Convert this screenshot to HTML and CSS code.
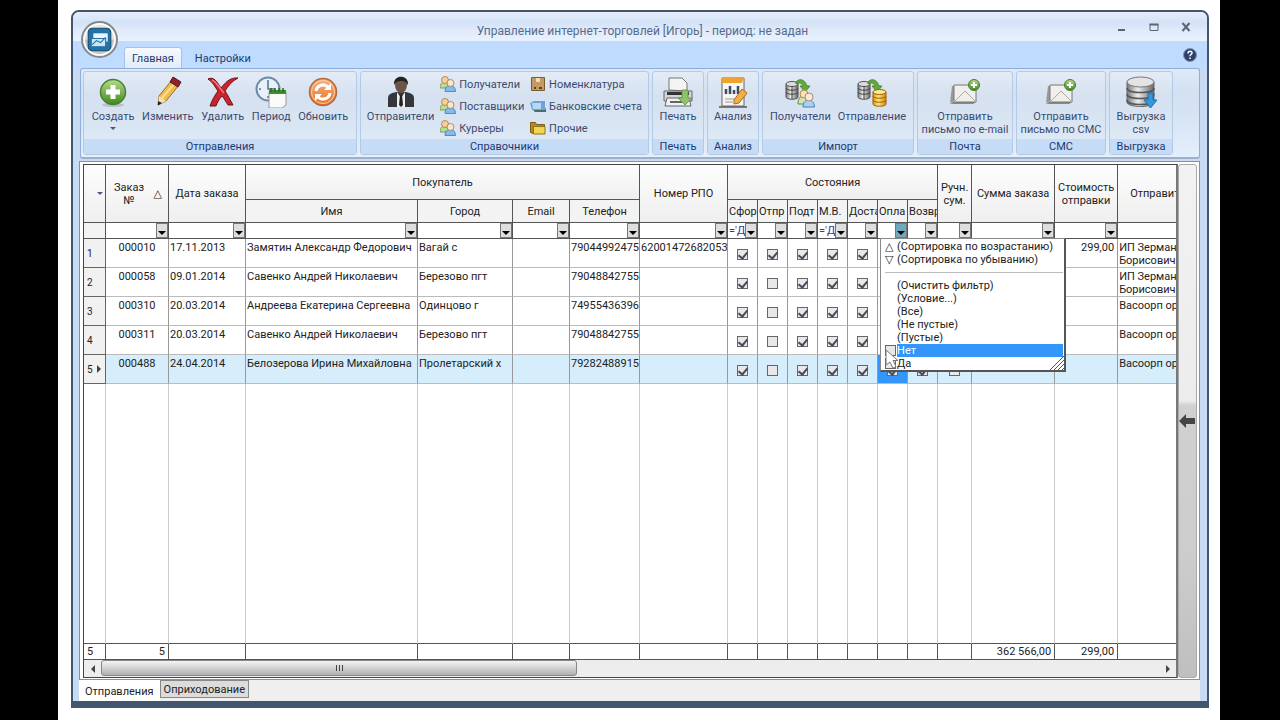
FILE: index.html
```html
<!DOCTYPE html>
<html lang="ru">
<head>
    <meta charset="utf-8">
    <title>Управление интернет-торговлей</title>
    <link rel="stylesheet" href="styles.css">
</head>
<body>
    <!-- Shared icons -->
    <svg class="sprite" aria-hidden="true">
        <defs>
            <linearGradient id="g-metal" x1="0" x2="1"><stop offset="0" stop-color="#777"/><stop offset=".4" stop-color="#eee"/><stop offset="1" stop-color="#666"/></linearGradient>
            <linearGradient id="g-green" x1="0" x2="0" y1="0" y2="1"><stop offset="0" stop-color="#b4dc8c"/><stop offset="1" stop-color="#3f8a1c"/></linearGradient>
            <linearGradient id="g-orange" x1="0" x2="0" y1="0" y2="1"><stop offset="0" stop-color="#f9b27a"/><stop offset="1" stop-color="#e8702a"/></linearGradient>
            <linearGradient id="g-gold" x1="0" x2="1"><stop offset="0" stop-color="#e0970f"/><stop offset=".4" stop-color="#ffe27a"/><stop offset="1" stop-color="#d88a08"/></linearGradient>
        </defs>
        <symbol id="people" viewBox="0 0 16 16">
            <path d="M0 12c0-4 2-6 4.500-6s4.500 2 4.500 6z" fill="#b9dc8e" stroke="#6d8a4e" stroke-width=".8"/>
            <circle cx="5" cy="4" r="3.500" fill="#f9cf96" stroke="#9c7a4c" stroke-width=".8"/>
            <path d="M5 15.500c0-4 2-6 5-6s5.500 2 5.500 6z" fill="#7fbdf0" stroke="#3f78ab" stroke-width=".8"/>
            <circle cx="10.500" cy="7" r="3.500" fill="#fbe6cd" stroke="#9c7a4c" stroke-width=".8"/>
        </symbol>
        <symbol id="letter" viewBox="0 0 32 32">
            <path d="M1 27l4-2V10H3z" fill="#999"/>
            <path d="M1 28l6-4h20v2l-3 2z" fill="#888"/>
            <path d="M5 9h22v17H5z" fill="#f1efec" stroke="#777"/>
            <path d="M5 26l11-11 11 11" fill="none" stroke="#aaa"/>
            <circle cx="25" cy="9" r="5.500" fill="url(#g-green)" stroke="#477c2a"/>
            <path d="M25 6v6M22 9h6" stroke="#fff" stroke-width="2"/>
        </symbol>
        <symbol id="server" viewBox="0 0 32 32">
            <path d="M2 8v13c0 3 12 3 12 0V8z" fill="url(#g-metal)" stroke="#555"/>
            <ellipse cx="8" cy="8" rx="6" ry="2.500" fill="#ddd" stroke="#555"/>
            <path d="M2 12c0 3 12 3 12 0M2 16c0 3 12 3 12 0M8 10v13" fill="none" stroke="#444"/>
            <path d="M12 6c3-4 9-3 11 4h3l-5 6-5-6h3c-1-3-4-4-7-2z" fill="#63ab3a" stroke="#3c7a1c" stroke-width=".8"/>
        </symbol>
    </svg>

    <div class="page">
        <div class="window">
            <div class="titlebar">
                <button class="app-button" aria-label="Меню приложения">
                    <svg viewBox="0 0 36 36">
                        <circle cx="18" cy="18" r="17" fill="#e4e6ea" stroke="#888" stroke-width="2"/>
                        <path d="M2 18h32a16 16 0 0 1-32 0z" fill="#c3c6cb"/>
                        <circle cx="18" cy="18" r="15" fill="none" stroke="#fff" stroke-width="1.500"/>
                        <rect x="7" y="7" width="22" height="22" rx="4" fill="#2374a5" stroke="#124a70"/>
                        <path d="M12 12h14v8H12z" fill="#e9f4fb"/>
                        <path d="M10 17h14v8H10z" fill="#cfe4f2" stroke="#2374a5"/>
                        <path d="M11 23l4-4 4 2 5-5" fill="none" stroke="#2374a5"/>
                    </svg>
                </button>
                <h1>Управление интернет-торговлей [Игорь] - период: не задан</h1>
                <div class="window-controls">
                    <button aria-label="Свернуть"><svg viewBox="0 0 12 12"><path d="M2 9h7" stroke="#5c6470" stroke-width="2"/></svg></button>
                    <button aria-label="Развернуть"><svg viewBox="0 0 12 12"><path d="M2 3.500h8v6H2z" fill="none" stroke="#5c6470"/><path d="M1.500 3.500h9" stroke="#5c6470" stroke-width="2"/></svg></button>
                    <button aria-label="Закрыть"><svg viewBox="0 0 12 12"><path d="M2.500 2l7 8M9.500 2l-7 8" stroke="#5c6470" stroke-width="2"/></svg></button>
                </div>
            </div>

            <div class="ribbon-tabs">
                <button class="ribbon-tab active">Главная</button>
                <button class="ribbon-tab">Настройки</button>
                <button class="help" aria-label="Справка">
                    <svg viewBox="0 0 14 14"><circle cx="7" cy="7" r="6.500" fill="#2d426b" stroke="#8393b3"/><path d="M5 5.500c0-3 4-3 4-.5 0 1.500-2 1.500-2 3.200M7 9.500v1.500" fill="none" stroke="#fff" stroke-width="1.500"/></svg>
                </button>
            </div>

            <div class="ribbon">
                <section class="group group-orders">
                    <div class="group-body">
                        <button class="tool">
                            <svg viewBox="0 0 32 32"><ellipse cx="16" cy="29" rx="11" ry="2" fill="#b9c2cc"/><circle cx="16" cy="16" r="12.500" fill="url(#g-green)" stroke="#4c7d33" stroke-width="1.500"/><path d="M16 9v14M9 16h14" stroke="#fff" stroke-width="5"/></svg>
                            Создать
                            <span class="arrow"></span>
                        </button>
                        <button class="tool">
                            <svg viewBox="0 0 32 32"><path d="M7 20L20 4l7 5-13 16-8 4z" fill="#f3bb4b" stroke="#9b6b25"/><path d="M10 22L23 7" stroke="#ffe08d" stroke-width="2"/><path d="M18 6l3-5 8 5-3 5z" fill="#8c2530" stroke="#5c141c"/><path d="M7 20l7 5-8 4z" fill="#f4dfbd"/><path d="M6 25l4 2-4 2.500z" fill="#222"/></svg>
                            Изменить
                        </button>
                        <button class="tool">
                            <svg viewBox="0 0 32 32"><path d="M1 3c6-3 9 3 13 9C18 7 23 1 31 2c-6 3-10 8-13 13 3 4 5 9 8 14h-5c-2-3-4-7-6-9-3 3-5 7-6 10H3c2-6 5-11 8-15C8 11 6 6 1 3z" fill="#c9232b" stroke="#6d1418"/><path d="M5 4c5 2 7 8 12 13" fill="none" stroke="#ef7b7b" stroke-width="1.500"/></svg>
                            Удалить
                        </button>
                        <button class="tool">
                            <svg viewBox="0 0 32 32"><circle cx="13" cy="13" r="11.500" fill="#e8f1fa" stroke="#6d8aa8" stroke-width="2"/><path d="M13 4v9h7M4 13h2M13 22v-2" fill="none" stroke="#5b6f88" stroke-width="1.500"/><path d="M14 16h17v13l-4 3H14z" fill="#fafafa" stroke="#999"/><path d="M14 14h17v4H14z" fill="#3c8e2f"/><path d="M16 12v4M20 12v4M24 12v4M28 12v4" stroke="#286b1e" stroke-width="1.500"/></svg>
                            Период
                        </button>
                        <button class="tool">
                            <svg viewBox="0 0 32 32"><circle cx="16" cy="16" r="13.500" fill="url(#g-orange)" stroke="#b06a3c" stroke-width="1.500"/><circle cx="16" cy="16" r="11.500" fill="none" stroke="#fbd0ae"/><path d="M9 15c1-6 8-8 12-4M23 17c-1 6-8 8-12 4" fill="none" stroke="#fff" stroke-width="3"/><path d="M24 7v7h-7zM8 25v-7h7z" fill="#fff"/></svg>
                            Обновить
                        </button>
                    </div>
                    <h2>Отправления</h2>
                </section>

                <section class="group group-refs">
                    <div class="group-body">
                        <button class="tool">
                            <svg viewBox="0 0 32 32"><path d="M3 31V22c0-4 4-5 8-6h10c4 1 8 2 8 6v9z" fill="#35373c"/><path d="M12 16l4 6 4-6v15h-8z" fill="#eee"/><path d="M15 19h2l1 10-2 2-2-2z" fill="#222"/><ellipse cx="16" cy="9" rx="6" ry="8" fill="#6b5548"/><path d="M9 9c-1-11 15-11 14 0-2-3-3-4-7-4s-5 1-7 4z" fill="#26221f"/></svg>
                            Отправители
                        </button>
                        <div class="tool-list">
                            <button class="small-tool"><svg><use href="#people"/></svg>Получатели</button>
                            <button class="small-tool"><svg><use href="#people"/></svg>Поставщики</button>
                            <button class="small-tool"><svg><use href="#people"/></svg>Курьеры</button>
                        </div>
                        <div class="tool-list">
                            <button class="small-tool"><svg viewBox="0 0 16 16"><path d="M1.500 1.500h13v13h-13z" fill="#c39a62" stroke="#7d5a30"/><path d="M6 2h4v4H6z" fill="#f1deb7"/><path d="M9 12h3M4 12h2" stroke="#5d4020" stroke-width="2"/></svg>Номенклатура</button>
                            <button class="small-tool"><svg viewBox="0 0 16 16"><path d="M0 5l4-2h11v9H2z" fill="#6ea3d8"/><path d="M2 5h9v6H3z" fill="#b5d8f4"/><path d="M3 12h12l1-3v5H5z" fill="#47706c"/></svg>Банковские счета</button>
                            <button class="small-tool"><svg viewBox="0 0 16 16"><path d="M.5 2.500h5l1 2h8v9H3l-2.500-1z" fill="#b88a1c" stroke="#7c5e15"/><path d="M3.500 6.500h11.500v7.500H3.500z" fill="#f3d64d" stroke="#8d701b"/></svg>Прочие</button>
                        </div>
                    </div>
                    <h2>Справочники</h2>
                </section>

                <section class="group group-single">
                    <div class="group-body">
                        <button class="tool">
                            <svg viewBox="0 0 32 32"><path d="M7 14V2h13l5 5v8z" fill="#f4f4f4" stroke="#777"/><path d="M2 15h28v10H2z" fill="#d4d4d4" stroke="#666"/><path d="M5 16h22v3H5z" fill="#333"/><path d="M5 22h22l2 8H3z" fill="#f1f1f1" stroke="#666"/><path d="M8 26h13" stroke="#666" stroke-width="2"/><path d="M20 14h6v8h4l-7 7-7-7h4z" fill="#8cc36b" stroke="#5b9440" stroke-width=".8"/></svg>
                            Печать
                        </button>
                    </div>
                    <h2>Печать</h2>
                </section>

                <section class="group group-single">
                    <div class="group-body">
                        <button class="tool">
                            <svg viewBox="0 0 32 32"><path d="M2 30h28v2H2z" fill="#777"/><path d="M5 2h22v28H5z" fill="#f5f5f5" stroke="#666"/><path d="M5 1h22l-2 6H5z" fill="#eea32d"/><path d="M9 18v-5M13 18v-8M17 18v-4M21 18v-8" stroke="#3e4d63" stroke-width="2.500"/><path d="M8 23h10M8 26h8" stroke="#999"/><path d="M17 24l8-11 5 4-8 10-5 1z" fill="#f2ad45" stroke="#a86d1e"/></svg>
                            Анализ
                        </button>
                    </div>
                    <h2>Анализ</h2>
                </section>

                <section class="group group-import">
                    <div class="group-body">
                        <button class="tool">
                            <svg viewBox="0 0 32 32"><use href="#server"/><path d="M14 28c0-6 3-8 5-8s5 2 5 8z" fill="#cfe3b4" stroke="#6d8a4e"/><circle cx="20" cy="18" r="4" fill="#f9dfb5" stroke="#b08a55"/><path d="M19 31c0-5 3-7 5.500-7s6 2 6 7z" fill="#a9d0f2" stroke="#4a7fae"/><circle cx="25" cy="21" r="4" fill="#fbe6dd" stroke="#b08a75"/></svg>
                            Получатели
                        </button>
                        <button class="tool">
                            <svg viewBox="0 0 32 32"><use href="#server"/><path d="M17 16v12c0 3 13 3 13 0V16z" fill="url(#g-gold)" stroke="#96640a"/><ellipse cx="23.500" cy="16" rx="6.500" ry="2.500" fill="#ffe698" stroke="#96640a"/><path d="M17 20c0 3 13 3 13 0M17 24c0 3 13 3 13 0" fill="none" stroke="#96640a"/></svg>
                            Отправление
                        </button>
                    </div>
                    <h2>Импорт</h2>
                </section>

                <section class="group group-mail">
                    <div class="group-body">
                        <button class="tool"><svg><use href="#letter"/></svg>Отправить<br>письмо по e-mail</button>
                    </div>
                    <h2>Почта</h2>
                </section>

                <section class="group group-sms">
                    <div class="group-body">
                        <button class="tool"><svg><use href="#letter"/></svg>Отправить<br>письмо по СМС</button>
                    </div>
                    <h2>СМС</h2>
                </section>

                <section class="group group-export">
                    <div class="group-body">
                        <button class="tool">
                            <svg viewBox="0 0 32 32"><path d="M2 6v20c0 6 27 6 27 0V6z" fill="url(#g-metal)" stroke="#666"/><ellipse cx="15.500" cy="6" rx="13.500" ry="5" fill="#e4e4e4" stroke="#777"/><path d="M2 12c0 6 27 6 27 0M2 18c0 6 27 6 27 0M2 24c0 6 27 6 27 0" fill="none" stroke="#555" stroke-width="1.500"/><path d="M23 17h5v7h4l-6.500 8-6.500-8h4z" fill="#3797dc" stroke="#1d6fae"/></svg>
                            Выгрузка<br>csv
                        </button>
                    </div>
                    <h2>Выгрузка</h2>
                </section>
            </div>

            <div class="workspace">
                <div class="grid">
                    <div class="table-box">
                        <table>
                            <colgroup>
                                <col class="c-num"><col class="c-order"><col class="c-date"><col class="c-name"><col class="c-city"><col class="c-email"><col class="c-phone"><col class="c-rpo">
                                <col class="c-state"><col class="c-state"><col class="c-state"><col class="c-state"><col class="c-state"><col class="c-state"><col class="c-state">
                                <col class="c-manual"><col class="c-sum"><col class="c-cost"><col>
                            </colgroup>
                            <thead>
                                <tr class="head-top">
                                    <th rowspan="2" aria-label="Меню таблицы"><span class="arrow corner"></span></th>
                                    <th rowspan="2"><span class="sorted"><span>Заказ<br>№</span><span>△</span></span></th>
                                    <th rowspan="2">Дата заказа</th>
                                    <th colspan="4">Покупатель</th>
                                    <th rowspan="2">Номер РПО</th>
                                    <th colspan="7">Состояния</th>
                                    <th rowspan="2">Ручн.<br>сум.</th>
                                    <th rowspan="2">Сумма заказа</th>
                                    <th rowspan="2">Стоимость<br>отправки</th>
                                    <th rowspan="2" class="clipped">Отправит</th>
                                </tr>
                                <tr class="head-sub">
                                    <th>Имя</th>
                                    <th>Город</th>
                                    <th>Email</th>
                                    <th>Телефон</th>
                                    <th class="state">Сфор</th>
                                    <th class="state">Отпр</th>
                                    <th class="state">Подт</th>
                                    <th class="state">М.В.</th>
                                    <th class="state">Доста</th>
                                    <th class="state">Опла</th>
                                    <th class="state">Возвр</th>
                                </tr>
                                <tr class="filters">
                                    <th></th>
                                    <td><div class="filter"><input type="text" aria-label="Заказ №"><button aria-label="Фильтр"></button></div></td>
                                    <td><div class="filter"><input type="text" aria-label="Дата заказа"><button aria-label="Фильтр"></button></div></td>
                                    <td><div class="filter"><input type="text" aria-label="Имя"><button aria-label="Фильтр"></button></div></td>
                                    <td><div class="filter"><input type="text" aria-label="Город"><button aria-label="Фильтр"></button></div></td>
                                    <td><div class="filter"><input type="text" aria-label="Email"><button aria-label="Фильтр"></button></div></td>
                                    <td><div class="filter"><input type="text" aria-label="Телефон"><button aria-label="Фильтр"></button></div></td>
                                    <td><div class="filter"><input type="text" aria-label="Номер РПО"><button aria-label="Фильтр"></button></div></td>
                                    <td><div class="filter"><input type="text" aria-label="Сфор" value="='Д"><button aria-label="Фильтр"></button></div></td>
                                    <td><div class="filter"><input type="text" aria-label="Отпр"><button aria-label="Фильтр"></button></div></td>
                                    <td><div class="filter"><input type="text" aria-label="Подт"><button aria-label="Фильтр"></button></div></td>
                                    <td><div class="filter"><input type="text" aria-label="М.В." value="='Д"><button aria-label="Фильтр"></button></div></td>
                                    <td><div class="filter"><input type="text" aria-label="Доста"><button aria-label="Фильтр"></button></div></td>
                                    <td>
                                        <div class="filter open">
                                            <input type="text" aria-label="Опла"><button aria-label="Фильтр"></button>
                                            <div class="menu">
                                                <button><span>△</span>(Сортировка по возрастанию)</button>
                                                <button><span>▽</span>(Сортировка по убыванию)</button>
                                                <hr>
                                                <button><span></span>(Очистить фильтр)</button>
                                                <button><span></span>(Условие...)</button>
                                                <button><span></span>(Все)</button>
                                                <button><span></span>(Не пустые)</button>
                                                <button><span></span>(Пустые)</button>
                                                <label><input type="checkbox"><b class="hot">Нет</b></label>
                                                <label><input type="checkbox"><b>Да</b></label>
                                                <svg class="grip" viewBox="0 0 14 14"><path d="M0 14L14 0M4 14L14 4M8 14l6-6M12 14l2-2" stroke="#555"/></svg>
                                                <svg class="cursor" viewBox="0 0 14 20"><path d="M1 1v15l4-3 3 6 3-1.500-3-6h5z" fill="#fff" stroke="#777"/></svg>
                                            </div>
                                        </div>
                                    </td>
                                    <td><div class="filter"><input type="text" aria-label="Возвр"><button aria-label="Фильтр"></button></div></td>
                                    <td><div class="filter"><input type="text" aria-label="Ручн. сум."><button aria-label="Фильтр"></button></div></td>
                                    <td><div class="filter"><input type="text" aria-label="Сумма заказа"><button aria-label="Фильтр"></button></div></td>
                                    <td><div class="filter"><input type="text" aria-label="Стоимость отправки"><button aria-label="Фильтр"></button></div></td>
                                    <td></td>
                                </tr>
                            </thead>
                            <tbody id="rows"></tbody>
                            <tfoot>
                                <tr>
                                    <td>5</td><td class="num">5</td><td></td><td></td><td></td><td></td><td></td><td></td>
                                    <td></td><td></td><td></td><td></td><td></td><td></td><td></td>
                                    <td></td><td class="num">362 566,00</td><td class="num">299,00</td><td></td>
                                </tr>
                            </tfoot>
                        </table>
                    </div>
                    <div class="hscroll">
                        <button class="left" aria-label="Влево"></button>
                        <div class="track"><div class="thumb"><i></i><i></i><i></i></div></div>
                        <button class="right" aria-label="Вправо"></button>
                    </div>
                </div>
                <div class="side-panel">
                    <button aria-label="Показать панель">
                        <svg viewBox="0 0 16 14"><path d="M0 7l7-7v4h9v6H7v4z" fill="#444"/></svg>
                    </button>
                </div>
            </div>

            <div class="sheet-tabs">
                <button class="active">Отправления</button>
                <button>Оприходование</button>
            </div>
        </div>
    </div>

    <script src="script.js"></script>
</body>
</html>
```

FILE: styles.css
```css
* {
    box-sizing: border-box;
}

body {
    margin: 0;
    height: 100vh;
    background-color: #000;
    font-family: Roboto, "DejaVu Sans", sans-serif;
    font-size: 11px;
    line-height: 13px;
    color: #222;
    overflow: hidden;
}

button,
input {
    font: inherit;
    color: inherit;
    margin: 0;
}

button {
    padding: 0;
    border: none;
    background: none;
    white-space: nowrap;
}

h1,
h2 {
    margin: 0;
    font-weight: normal;
}

.sprite {
    position: absolute;
    width: 0;
    height: 0;
}

.page {
    height: 100%;
    margin: 0 60px 0 58px;
    padding: 10px 11px 12px 13px;
    background-color: #fff;
}

.window {
    display: flex;
    flex-direction: column;
    height: 100%;
    border: 2px solid #43566f;
    border-bottom-width: 7px;
    border-radius: 8px 8px 0 0;
    background-color: #c9daf5;
}

/* Title bar */
.titlebar {
    display: flex;
    position: relative;
    align-items: center;
    height: 29px;
    flex-shrink: 0;
    border-radius: 6px 6px 0 0;
    background: linear-gradient(#e6effc, #d3e2f6 35%, #dfeafa 60%, #e9f2fe);
}

.titlebar h1 {
    flex: 1;
    text-align: center;
    font-size: 12px;
    line-height: 16px;
    color: #566a8c;
    padding-top: 8px;
    padding-left: 96px;
}

.app-button {
    position: absolute;
    left: 8px;
    top: 9px;
    width: 37px;
    height: 37px;
}

.app-button svg {
    width: 100%;
    height: 100%;
}

.window-controls {
    display: flex;
    gap: 20px;
    padding-right: 15px;
}

.window-controls svg {
    display: block;
    width: 12px;
    height: 12px;
}

/* Ribbon */
.ribbon-tabs {
    display: flex;
    align-items: flex-end;
    height: 27px;
    flex-shrink: 0;
    padding: 0 10px 0 51px;
    background-color: #bfdbff;
    color: #1c3a70;
}

.ribbon-tab {
    height: 21px;
    padding: 0 7px;
    margin-right: 5px;
    border: 1px solid transparent;
    border-bottom: none;
    border-radius: 3px 3px 0 0;
}

.ribbon-tab.active {
    background: linear-gradient(#f6fafe, #e2ebf7);
    border-color: #a5c3ea;
}

.help {
    margin-left: auto;
    align-self: center;
}

.help svg {
    display: block;
    width: 14px;
    height: 14px;
}

.ribbon {
    display: flex;
    gap: 3px;
    height: 91px;
    flex-shrink: 0;
    margin: 0 7px;
    padding: 2px;
    border: 1px solid #8fafdb;
    border-bottom: 2px solid #9db0cc;
    border-radius: 3px;
    background: linear-gradient(#dfe9f6, #d3e1f2 25%, #d5e3f4 50%, #e4effc);
    color: #3a4a6e;
}

.group {
    display: flex;
    flex-direction: column;
    flex-shrink: 0;
    border: 1px solid #b3c9e6;
    border-radius: 3px;
    background: linear-gradient(#e3ebf6, #d5e1f0 30%, #dbe6f4 70%, #e3eefa);
}

.group-orders { width: 274px; }
.group-refs { width: 289px; }
.group-single { width: 52px; }
.group-import { width: 152px; }
.group-mail { width: 96px; }
.group-sms { width: 90px; }
.group-export { width: 64px; }

.group h2 {
    height: 15px;
    font-size: 11px;
    line-height: 15px;
    text-align: center;
    background-color: #c6dbf6;
    color: #1c3a70;
}

.group-body {
    display: flex;
    flex: 1;
    justify-content: space-evenly;
    align-items: flex-start;
    padding-top: 1px;
}

.tool {
    display: flex;
    flex-direction: column;
    align-items: center;
    text-align: center;
    padding-top: 3px;
}

.tool svg {
    width: 32px;
    height: 32px;
    margin-bottom: 2px;
}

.arrow {
    width: 0;
    border: 3px solid transparent;
    border-top-color: #4a5a7a;
    border-bottom: none;
    margin-top: 4px;
}

.tool-list {
    display: flex;
    flex-direction: column;
}

.small-tool {
    display: flex;
    align-items: center;
    gap: 3px;
    height: 22px;
}

.small-tool svg {
    width: 16px;
    height: 16px;
}

/* Table */
.workspace {
    display: flex;
    flex: 1;
    min-height: 0;
    margin: 2px 7px 0 6px;
    padding: 2px 1px 1px 3px;
    border: 1px solid #8590a3;
    background-color: #fff;
}

.grid {
    display: flex;
    flex-direction: column;
    flex: 1;
    min-width: 0;
    border: 1px solid #444;
    border-right: 2px solid #777;
    overflow: hidden;
}

.table-box {
    flex: 1;
    min-height: 0;
}

table {
    width: 100%;
    height: 100%;
    table-layout: fixed;
    border-collapse: separate;
    border-spacing: 0;
}

.c-num { width: 22px; }
.c-order { width: 63px; }
.c-date { width: 77px; }
.c-name { width: 172px; }
.c-city { width: 95px; }
.c-email { width: 57px; }
.c-phone { width: 70px; }
.c-rpo { width: 88px; }
.c-state { width: 30px; }
.c-manual { width: 34px; }
.c-sum { width: 83px; }
.c-cost { width: 63px; }

th,
td {
    padding: 0;
    font-weight: normal;
    white-space: nowrap;
    border-right: 1px solid #555;
    border-bottom: 1px solid #555;
}

th:last-child,
td:last-child,
.head-top th:last-child {
    border-right: none;
}

.head-top th {
    background: linear-gradient(#fdfdfd, #efefef);
}

.head-sub th,
.filters th {
    background-color: #f3f3f3;
}

.head-sub th:last-child {
    border-right: 1px solid #555;
}

.head-top { height: 35px; }
.head-sub { height: 23px; }
.filters { height: 16px; }
tfoot tr { height: 16px; }

.head-sub .state {
    text-align: left;
    padding-left: 1px;
    overflow: hidden;
}

.head-top .clipped {
    text-align: left;
    padding-left: 12px;
    overflow: hidden;
}

.sorted {
    display: flex;
    align-items: center;
    justify-content: space-between;
    padding: 0 6px 0 8px;
}

.corner {
    display: block;
    margin: 0 2px 0 auto;
}

.filter {
    display: flex;
    position: relative;
    justify-content: flex-end;
    height: 15px;
}

.filter > input {
    flex: 1;
    width: 0;
    padding: 0 0 0 1px;
    border: none;
    outline: none;
    background: none;
    color: #3636a0;
}

.filter > button {
    width: 12px;
    border: 1px solid #777;
    background-color: #dedede;
}

.filter > button::after {
    content: "";
    display: block;
    margin: 4px auto 0;
    width: 0;
    border: 4px solid transparent;
    border-top-color: #000;
    border-bottom: none;
}

.filter.open > button {
    background-color: #6fa9c0;
}

tbody tr {
    height: 29px;
}

tbody tr.rest {
    height: auto;
}

tbody td,
tbody th {
    border-right-color: #999;
    border-bottom-color: #bbb;
}

tbody td {
    vertical-align: top;
    padding: 2px 1px 0;
    overflow: hidden;
}

tbody th {
    text-align: left;
    padding-left: 3px;
    background-color: #f1f1f1;
    border-color: #666;
    font-size: 10px;
}

tbody .order {
    text-align: center;
}

tbody .phone {
    text-align: right;
}

tbody .check {
    text-align: center;
    vertical-align: middle;
}

tbody .num,
tfoot .num {
    text-align: right;
    padding-right: 3px;
}

tr.current td {
    background-color: #d6edfb;
}

tr.current td.focused {
    background-color: #3296fa;
}

tr.current th::after {
    content: "";
    display: inline-block;
    margin-left: 4px;
    border: 4px solid transparent;
    border-left-color: #444;
    border-right: none;
}

tbody .rest td,
tbody .rest th {
    background: #fff;
    border-right-color: #ccc;
    border-bottom-color: #555;
}

tfoot td:first-child {
    padding-left: 3px;
}

input[type="checkbox"] {
    appearance: none;
    display: inline-block;
    width: 11px;
    height: 11px;
    vertical-align: middle;
    border: 1px solid #666;
    background-color: #e8e8e8;
}

input[type="checkbox"]:checked::after {
    content: "";
    display: block;
    width: 4px;
    height: 7px;
    margin: 0 auto;
    border: solid #4a4a5c;
    border-width: 0 2px 2px 0;
    transform: rotate(40deg);
}

/* Filter drop-down */
.menu {
    position: absolute;
    top: 15px;
    left: 2px;
    z-index: 2;
    width: 186px;
    padding: 1px 1px 0 4px;
    border: 1px solid #888;
    border-right: 2px solid #555;
    border-bottom: 2px solid #555;
    background-color: #fff;
}

.menu button,
.menu label {
    display: flex;
    width: 100%;
    height: 13px;
    align-items: center;
}

.menu span {
    width: 12px;
    text-align: left;
    line-height: 11px;
}

.menu hr {
    height: 1px;
    margin: 6px 0;
    border: none;
    background-color: #bbb;
}

.menu b {
    flex: 1;
    margin-left: 1px;
    font-weight: normal;
    text-align: left;
}

.menu .hot {
    background-color: #3296fa;
    color: #fff;
}

.grip {
    position: absolute;
    right: 0;
    bottom: 0;
    width: 14px;
    height: 14px;
}

.cursor {
    position: absolute;
    left: 4px;
    bottom: 1px;
    width: 14px;
    height: 20px;
}

/* Horizontal scrollbar */
.hscroll {
    display: flex;
    height: 17px;
    flex-shrink: 0;
    background-color: #ededed;
}

.hscroll button {
    width: 17px;
}

.hscroll button::after {
    content: "";
    display: block;
    width: 0;
    margin: 0 auto;
    border: 4px solid transparent;
}

.hscroll .left::after {
    border-right-color: #444;
    border-left: none;
}

.hscroll .right::after {
    border-left-color: #444;
    border-right: none;
}

.track {
    flex: 1;
}

.thumb {
    display: flex;
    align-items: center;
    justify-content: center;
    gap: 2px;
    width: 45%;
    height: 16px;
    border: 1px solid #888;
    border-radius: 3px;
    background: linear-gradient(#f4f4f4, #d2d2d2 50%, #b0b0b0);
}

.thumb i {
    width: 1px;
    height: 6px;
    background-color: #444;
}

/* Collapsed panel on the right */
.side-panel {
    display: flex;
    width: 19px;
    margin-right: 1px;
    border: 1px solid #aaa;
    border-radius: 3px;
    background: linear-gradient(#f2f2f2, #ececec 46%, #d0d0d0 47%, #cdcdcd 75%, #bfbfbf);
}

.side-panel button {
    width: 100%;
}

.side-panel svg {
    display: block;
    width: 16px;
    height: 14px;
}

/* Sheet tabs */
.sheet-tabs {
    display: flex;
    align-items: flex-start;
    height: 21px;
    flex-shrink: 0;
    margin: 0 7px 0 6px;
    background-color: #efefef;
}

.sheet-tabs button {
    height: 18px;
    padding: 0 3px;
    border: 1px solid #888;
    background-color: #dcdcdc;
}

.sheet-tabs .active {
    height: 21px;
    padding: 2px 6px 0;
    border: none;
    background-color: #fff;
}
```

FILE: script.js
```js
// states: Сфор, Отпр, Подт, М.В., Дост, Опла, Возвр, Ручн. сум.
var orders = [
    { no: "000010", date: "17.11.2013", name: "Замятин Александр Федорович", city: "Вагай с", phone: "79044992475", rpo: "62001472682053", states: [1, 1, 1, 1, 1, 1, 1, 0], cost: "299,00", sender: "ИП Зерман<br>Борисович" },
    { no: "000058", date: "09.01.2014", name: "Савенко Андрей Николаевич", city: "Березово пгт", phone: "79048842755", rpo: "", states: [1, 0, 1, 1, 1, 1, 1, 0], cost: "", sender: "ИП Зерман<br>Борисович" },
    { no: "000310", date: "20.03.2014", name: "Андреева Екатерина Сергеевна", city: "Одинцово г", phone: "74955436396", rpo: "", states: [1, 0, 1, 1, 1, 1, 1, 0], cost: "", sender: "Васоорп ор" },
    { no: "000311", date: "20.03.2014", name: "Савенко Андрей Николаевич", city: "Березово пгт", phone: "79048842755", rpo: "", states: [1, 0, 1, 1, 1, 1, 1, 0], cost: "", sender: "Васоорп ор" },
    { no: "000488", date: "24.04.2014", name: "Белозерова Ирина Михайловна", city: "Пролетарский х", phone: "79282488915", rpo: "", states: [1, 0, 1, 1, 1, 1, 1, 0], cost: "", sender: "Васоорп ор", current: true }
];

var html = "";
orders.forEach(function (order, index) {
    html += "<tr class='" + (order.current ? "current" : "") + "'><th>" + (index + 1) + "</th>";
    html += "<td class='order'>" + order.no + "</td><td>" + order.date + "</td><td>" + order.name + "</td>";
    html += "<td>" + order.city + "</td><td></td><td class='phone'>" + order.phone + "</td><td>" + order.rpo + "</td>";
    order.states.forEach(function (on, i) {
        html += "<td class='check" + (i === 5 ? " focused" : "") + "'><input type='checkbox' aria-label='Состояние'" + (on ? " checked" : "") + "></td>";
    });
    html += "<td></td><td class='num'>" + order.cost + "</td><td>" + order.sender + "</td></tr>";
});

// Empty space under the last order
html += "<tr class='rest'><th></th>" + "<td></td>".repeat(18) + "</tr>";

document.getElementById("rows").innerHTML = html;
```
